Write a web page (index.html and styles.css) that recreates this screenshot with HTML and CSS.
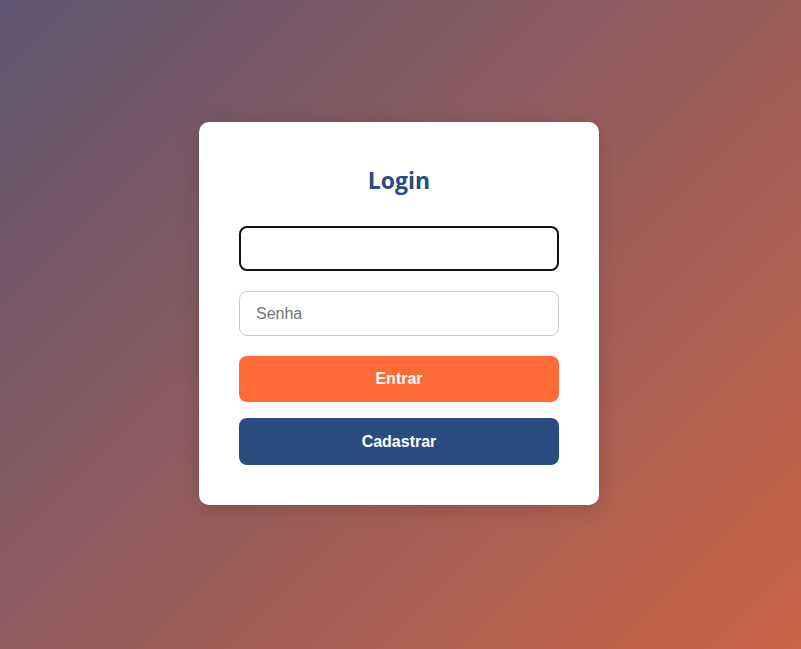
FILE: index.html
```html
<!DOCTYPE html>
<html lang="pt">
<head>
<meta charset="utf-8">
<title>Login</title>
<link rel="stylesheet" href="styles.css">
</head>
<body>
  <main class="card">
    <h2 class="title">Login</h2>
    <form class="form">
      <input class="field field-focused" type="text" aria-label="Usuário">
      <input class="field" type="password" placeholder="Senha">
      <div class="actions">
        <button class="btn btn-primary" type="button">Entrar</button>
        <button class="btn btn-secondary" type="button">Cadastrar</button>
      </div>
    </form>
  </main>
</body>
</html>
```
FILE: styles.css
```css
html, body {
  margin: 0;
  height: 100%;
}
body {
  box-sizing: border-box;
  min-height: 100vh;
  display: flex;
  justify-content: center;
  align-items: flex-start;
  padding: 122px 3px 0 0;
  background: linear-gradient(135deg, #5f5571 0%, #cc6446 100%);
  font-family: "Liberation Sans", Arial, sans-serif;
}
.card {
  box-sizing: border-box;
  width: 400px;
  background: #ffffff;
  border-radius: 10px;
  padding: 40px;
  box-shadow: 0 4px 20px rgba(0, 0, 0, 0.15);
}
.title {
  margin: 0 0 28px;
  text-align: center;
  font-family: "Open Sans", "Noto Sans", sans-serif;
  font-weight: 700;
  font-size: 23px;
  line-height: 36px;
  color: #2b4c7e;
}
.form {
  display: flex;
  flex-direction: column;
  gap: 20px;
}
.field {
  box-sizing: border-box;
  width: 100%;
  height: 45px;
  margin: 0;
  padding: 0 16px;
  border: 1px solid #cccccc;
  border-radius: 8px;
  font-family: "Liberation Sans", Arial, sans-serif;
  font-size: 16px;
  color: #222;
  background: #fff;
  outline: none;
}
.field::placeholder {
  color: #757575;
}
.field-focused {
  border: 2px solid #111111;
  padding: 0 15px;
}
.actions {
  display: flex;
  flex-direction: column;
  gap: 16px;
}
.btn {
  box-sizing: border-box;
  width: 100%;
  height: 46px;
  border: none;
  border-radius: 8px;
  font-family: "Liberation Sans", Arial, sans-serif;
  font-size: 16px;
  font-weight: 700;
  color: #ffffff;
  cursor: pointer;
}
.btn-primary {
  background: #ff6b35;
}
.btn-secondary {
  background: #2b4c7e;
  height: 47px;
}
```
